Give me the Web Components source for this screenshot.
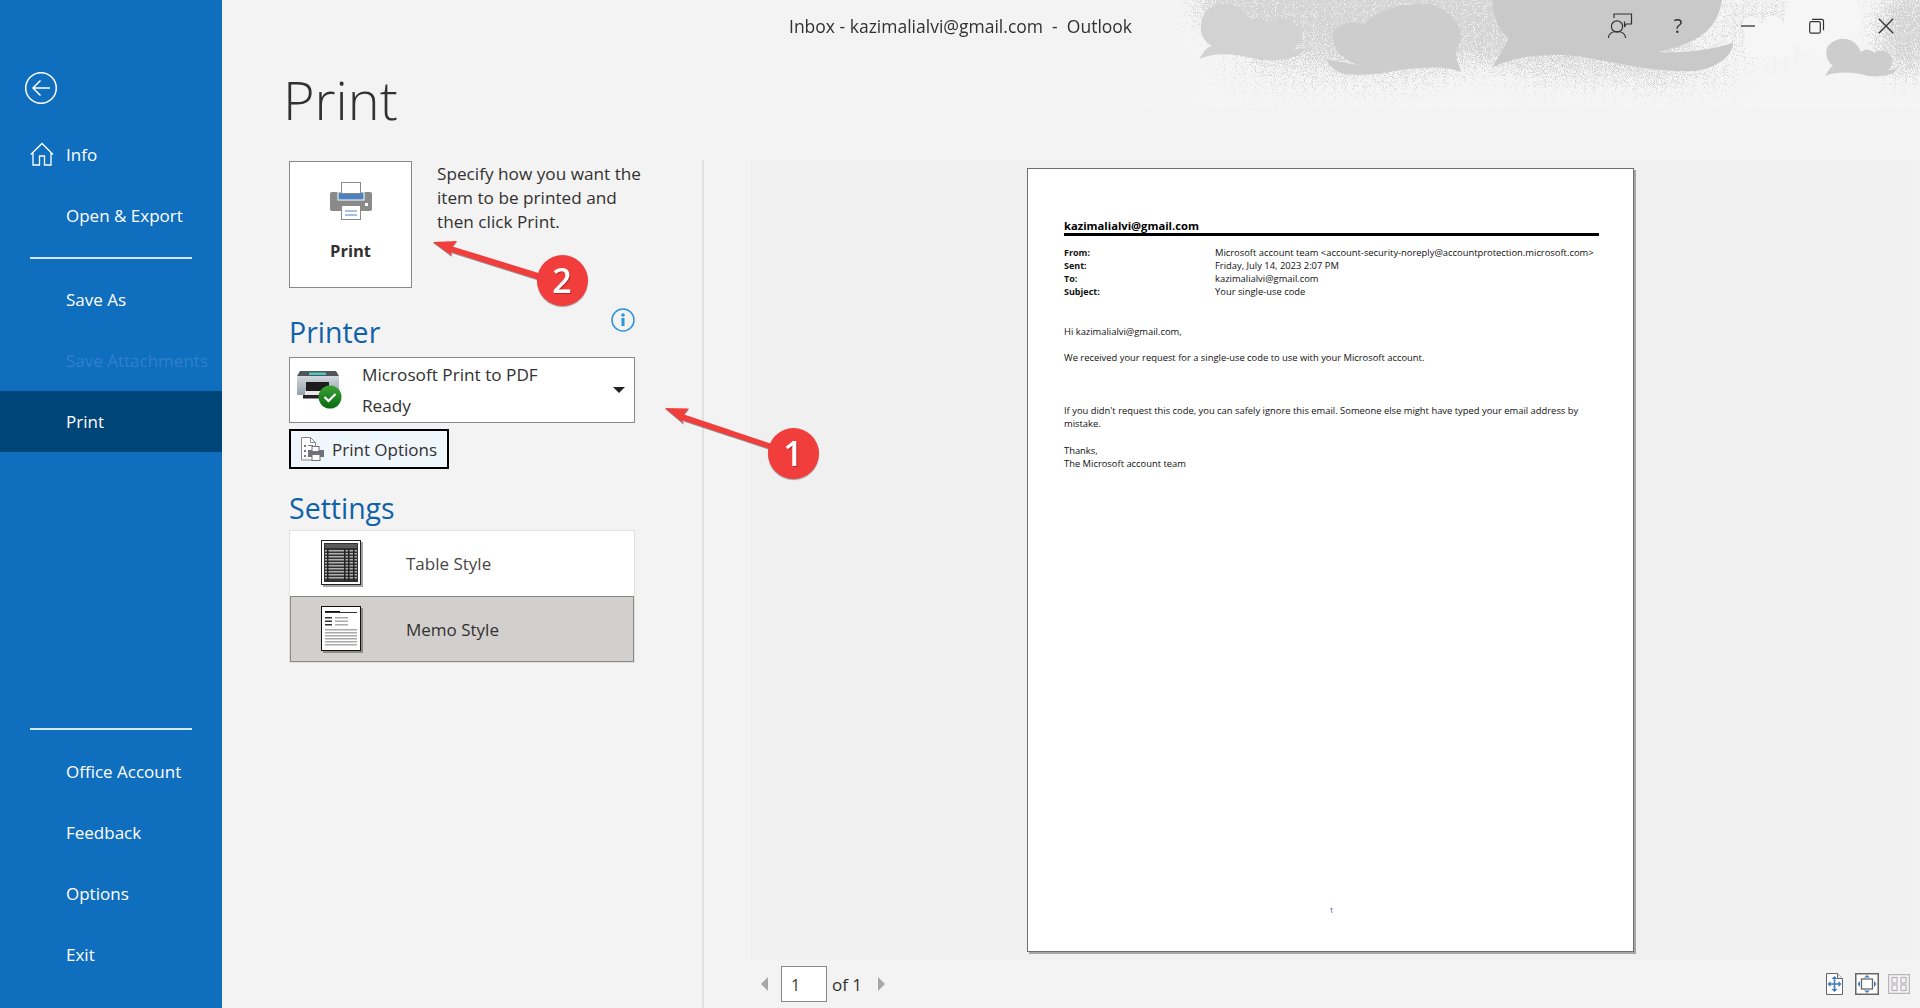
<!DOCTYPE html>
<html lang="en"><head><meta charset="utf-8"><title>Print - Outlook</title>
<style>
html,body{margin:0;height:100%;overflow:hidden}
body{font-family:"Open Sans","Noto Sans",sans-serif;background:#f3f3f3;color:#323130}
</style></head><body>
<app-shell>
  <side-bar slot="side">
    <back-button></back-button>
    <nav-item><svg slot="icon" width="24" height="24" viewBox="0 0 24 24" fill="none" stroke="#fff" stroke-width="1.3"><path d="M.8 12.5 12 1.5l11 11M3 10.5V23h6.5v-9h5v9H21V10.5"/></svg>Info</nav-item>
    <nav-item>Open &amp; Export</nav-item>
    <side-rule></side-rule>
    <nav-item>Save As</nav-item>
    <nav-item disabled>Save Attachments</nav-item>
    <nav-item active>Print</nav-item>
    <side-gap></side-gap>
    <side-rule></side-rule>
    <nav-item>Office Account</nav-item>
    <nav-item>Feedback</nav-item>
    <nav-item>Options</nav-item>
    <nav-item>Exit</nav-item>
  </side-bar>
  <main-pane slot="main">
    <cloud-art></cloud-art>
    <title-bar>Inbox - kazimalialvi@gmail.com&nbsp; -&nbsp; Outlook</title-bar>
    <page-title>Print</page-title>
    <print-columns>
      <print-settings slot="left"></print-settings>
      <print-preview slot="right">
        <mail-page></mail-page>
      </print-preview>
    </print-columns>
    <call-outs></call-outs>
  </main-pane>
</app-shell>
<script>
function def(name, html){
  const t=document.createElement('template');t.innerHTML=html;
  customElements.define(name,class extends HTMLElement{
    constructor(){super();this.attachShadow({mode:'open'}).appendChild(t.content.cloneNode(true));}
  });
}
def('app-shell',`<style>:host{display:grid;grid-template-columns:222px 1fr;width:1920px;height:1008px;overflow:hidden}</style><slot name="side"></slot><slot name="main"></slot>`);
def('side-bar',`<style>:host{display:flex;flex-direction:column;background:#106ebe;height:1008px;padding-bottom:23.5px;box-sizing:border-box;color:#fff}</style><slot></slot>`);
def('back-button',`<style>:host{display:block;height:123.5px;box-sizing:border-box;padding:71px 0 0 25px}svg{display:block}</style>
<svg width="32" height="34" viewBox="0 0 32 34" fill="none" stroke="#fff" stroke-width="1.5"><circle cx="16" cy="17" r="15.3"/><path d="M25 17H8M15.5 9.5 8 17l7.5 7.5"/></svg>`);
def('nav-item',`<style>:host{display:grid;grid-template-columns:66px 1fr;align-items:center;height:61px;font-size:17px;color:#fff;white-space:nowrap;flex:none}
:host([active]){background:#004578}:host([disabled]){color:#2f80cc}.i{padding-left:30px;display:flex}</style><span class="i"><slot name="icon"></slot></span><span><slot></slot></span>`);
def('side-rule',`<style>:host{display:block;height:2px;background:#d5e6f5;margin:11px 30px 10.5px;flex:none}</style>`);
def('side-gap',`<style>:host{display:block;flex:1}</style>`);
def('main-pane',`<style>:host{display:flex;flex-direction:column;position:relative;background:#f3f3f3;height:1008px;min-width:0}</style><slot></slot>`);
def('cloud-art',`<style>:host{position:absolute;top:0;right:0;width:800px;height:108px;pointer-events:none}svg{display:block}</style>
<svg width="800" height="108" viewBox="1120 0 800 108">
<defs>
<linearGradient id="fade" x1="0" y1="0" x2="1" y2="0"><stop offset="0" stop-color="#f5f5f5" stop-opacity="0"/><stop offset=".12" stop-color="#f5f5f5"/></linearGradient>
<filter id="st" filterUnits="userSpaceOnUse" x="1120" y="0" width="800" height="108" color-interpolation-filters="sRGB">
<feGaussianBlur in="SourceGraphic" stdDeviation="16" result="d"/>
<feTurbulence type="fractalNoise" baseFrequency="1.1" numOctaves="1" seed="4" result="n"/>
<feColorMatrix in="n" type="matrix" values="0 0 0 0 0 0 0 0 0 0 0 0 0 0 0 2.6 0 0 0 -0.8" result="m"/>
<feComposite in="d" in2="m" operator="arithmetic" k1="0" k2="1" k3="1" k4="-1" result="s"/>
<feComponentTransfer in="s" result="a"><feFuncA type="linear" slope="3"/></feComponentTransfer>
<feFlood flood-color="#d4d4d4"/><feComposite in2="a" operator="in"/>
</filter>
<filter id="b2" x="-20%" y="-20%" width="140%" height="140%"><feGaussianBlur stdDeviation=".5"/></filter>
</defs>
<rect x="1120" width="800" height="108" fill="url(#fade)"/>
<g filter="url(#st)">
<ellipse cx="1400" cy="5" rx="210" ry="58" fill="#000"/>
<ellipse cx="1580" cy="45" rx="120" ry="40" fill="#000" opacity=".72"/>
<ellipse cx="1760" cy="20" rx="60" ry="35" fill="#000" opacity=".5"/>
<ellipse cx="1680" cy="72" rx="70" ry="20" fill="#000" opacity=".5"/>
<ellipse cx="1340" cy="72" rx="130" ry="24" fill="#000" opacity=".42"/>
<ellipse cx="1908" cy="30" rx="35" ry="50" fill="#000"/>
</g>
<circle cx="1822" cy="18" r="38" fill="#f6f6f6" filter="url(#b2)"/>
<g fill="#f6f6f6"><circle cx="1752" cy="26" r="10"/><circle cx="1772" cy="25" r="10"/><circle cx="1785" cy="30" r="9"/><rect x="1745" y="27" width="50" height="30"/></g>
<g fill="#cdcdcd">
<path fill="#d2d2d2" d="M1199 59C1204 52 1206 47 1212 46 1200 40 1198 25 1204 14 1212 2 1238-2 1250 20 1258 17 1264 18 1268 24 1280 14 1300 18 1300 35 1300 42 1296 46 1292 50L1306 48C1300 58 1280 62 1260 60 1235 53 1215 52 1199 59Z"/>
<path d="M1326 59C1335 61 1345 63 1358 65 1340 58 1332 48 1333 35 1335 24 1350 20 1365 24 1375 12 1400 2 1430 4 1450 10 1462 25 1461 38 1460 45 1455 50 1456 55 1456 62 1460 66 1461 72 1445 66 1425 67 1400 70 1375 75 1345 78 1335 70 1330 66 1328 62 1326 59Z"/>
<path fill="#c9c9c9" d="M1493 67C1498 58 1503 50 1509 38 1502 32 1493 22 1493 0L1722 0C1718 25 1705 42 1658 52 1680 54 1710 50 1733 43 1733 55 1718 68 1695 71 1670 73 1630 66 1600 60 1570 54 1530 50 1493 67Z"/>
<path d="M1825 76C1829 70 1830 67 1833 66 1825 60 1824 48 1830 44 1838 36 1855 36 1861 52 1866 48 1872 50 1874 53 1882 47 1893 52 1892 62 1892 66 1890 69 1888 70L1897 69C1893 76 1880 77 1868 76 1855 72 1838 71 1825 76Z"/>
</g>
</svg>`);
def('title-bar',`<style>:host{display:flex;align-items:center;position:relative;height:52px;flex:none;font-size:17.5px;color:#323130;white-space:nowrap}
.t{margin-left:567px}.w{position:absolute;left:1386px;top:0;height:52px;display:flex;align-items:center;color:#333}
.w>*{width:69px;display:flex;justify-content:center;align-items:center;flex:none;margin-left:0}
.q{font-size:20px;font-weight:400;line-height:1}</style>
<span class="t"><slot></slot></span>
<span class="w">
<span style="width:58px;margin-left:-17px"><svg width="26" height="26" viewBox="0 0 26 26" fill="none" stroke="#333" stroke-width="1.2"><circle cx="10" cy="13.5" r="5.6"/><path d="M1.300 25c.6-5 4-6.500 8.700-6.500S18 20 18.700 25"/><path d="M7 5V1h17.500v10H19l-1.500 3V8.500"/></svg></span>
<span class="q" style="width:58px">?</span>
<span style="width:69px;margin-left:6px"><svg width="16" height="16" viewBox="0 0 16 16"><path d="M1 8h14" stroke="#333" stroke-width="1.3"/></svg></span>
<span><svg width="16" height="16" viewBox="0 0 16 16" fill="none" stroke="#333" stroke-width="1.2"><rect x=".7" y="3.700" width="10.600" height="11.500" rx="1.500"/><path d="M3 1.300h9.500c1.200 0 2 .8 2 2v9"/></svg></span>
<span><svg width="16" height="16" viewBox="0 0 16 16"><path d="M.8.800l14.400 14.400M15.200.8.800 15.200" stroke="#333" stroke-width="1.300"/></svg></span>
</span>`);
def('page-title',`<style>:host{display:block;height:108px;box-sizing:border-box;padding:15px 0 0 61px;font-size:54px;font-weight:300;line-height:64px;color:#323130;flex:none;position:relative}</style><slot></slot>`);
def('print-columns',`<style>:host{display:grid;grid-template-columns:481px 1fr;flex:1;min-height:0}</style><slot name="left"></slot><slot name="right"></slot>`);
def('print-settings',`<style>
:host{display:block;box-sizing:border-box;padding:1px 0 0 67px;border-right:2px solid #e1e1e1;width:482px;font-size:17px}
.top{display:flex;gap:25px}
.pb{width:123px;height:127px;box-sizing:border-box;background:#fff;border:1px solid #8a8886;display:flex;flex-direction:column;align-items:center;padding-top:20px;flex:none}
.pb svg{display:block}.pb b{margin-top:19px;font-size:16.5px;font-weight:700;color:#323130;line-height:24px}
.desc{line-height:24px;margin-top:.5px;color:#323130;white-space:nowrap;font-size:17.2px}
.hrow{display:flex;justify-content:space-between;width:346px;padding-top:20px;align-items:flex-start}
h2{margin:4px 0 5px 0;height:40px;line-height:40px;font-size:28.5px;font-weight:400;color:#0f62a8}
.dd{width:346px;height:66px;box-sizing:border-box;background:#fff;border:1px solid #8a8886;display:grid;grid-template-columns:72px 1fr 30px;align-items:center}
.dd .ic{padding-left:7px;display:flex}
.dd .tx{display:flex;flex-direction:column;gap:7px;line-height:24px;font-size:17.2px}
.car{width:0;height:0;border:6px solid transparent;border-top:6px solid #222;border-bottom:0;justify-self:center}
.opt{display:flex;align-items:center;box-sizing:border-box;height:40px;width:160px;margin-top:6px;border:2px solid #000;background:#eff6fc;padding-left:10px;gap:8px}
.setH{margin:19px 0 2px 0}
.list{width:346px;box-sizing:border-box;border:1px solid #e1e1e1}
.it{height:65px;box-sizing:border-box;display:grid;grid-template-columns:116px 1fr;align-items:center;background:#fff;color:#484644}
.it svg{margin-left:31px;display:block}
.it.sel{height:66px;background:#d2d0ce;border:1px solid #8a8886;color:#323130;grid-template-columns:115px 1fr}
.it.sel svg{margin-left:30px}
</style>
<div class="top"><div class="pb">
<svg width="44" height="38" viewBox="0 0 44 38"><path fill="#8a8a8a" d="M3 10h38a2 2 0 0 1 2 2v15a2 2 0 0 1-2 2H3a2 2 0 0 1-2-2V12a2 2 0 0 1 2-2Z"/><rect x="9" y="10" width="26" height="8" fill="#4f81bd" stroke="#fff" stroke-width="1"/><rect x="12.500" y=".5" width="19" height="11" fill="#fff" stroke="#8a8a8a"/><rect x="12.500" y="23.500" width="19" height="14" fill="#fff" stroke="#8a8a8a"/><path d="M16 29h12M16 33h12" stroke="#4f81bd"/><rect x="36" y="21" width="3" height="3" fill="#fff"/></svg>
<b>Print</b></div>
<div class="desc">Specify how you want the<br>item to be printed and<br>then click Print.</div></div>
<div class="hrow"><h2>Printer</h2><svg width="24" height="24" viewBox="0 0 24 24"><circle cx="12" cy="12" r="11" fill="none" stroke="#2b93d6" stroke-width="1.500"/><rect x="10.500" y="10" width="3" height="8" fill="#2b93d6"/><circle cx="12" cy="7" r="1.800" fill="#2b93d6"/></svg></div>
<div class="dd"><span class="ic"><svg width="46" height="40" viewBox="0 0 46 40"><defs><linearGradient id="bd" x1="0" y1="0" x2="0" y2="1"><stop offset="0" stop-color="#d2d9de"/><stop offset="1" stop-color="#93a0a8"/></linearGradient><linearGradient id="gr" x1="0" y1="0" x2="0" y2="1"><stop offset="0" stop-color="#3aa335"/><stop offset="1" stop-color="#0a6a12"/></linearGradient></defs><path fill="#4f5659" d="M3 1h36l3 5H0Z"/><rect x="12" y="2.500" width="17" height="2.500" fill="#4ec8c0"/><rect y="6" width="42" height="19" rx="1" fill="url(#bd)"/><rect x="9" y="12" width="23" height="9" fill="#1c1c1c"/><rect x="8" y="21" width="25" height="4" fill="#e8e8e8"/><rect x="6" y="25" width="30" height="3.500" fill="#222"/><circle cx="33" cy="27" r="11.500" fill="url(#gr)"/><path d="m27.500 27 4 4 7-7" fill="none" stroke="#fff" stroke-width="2.200"/></svg></span>
<span class="tx"><span>Microsoft Print to PDF</span><span>Ready</span></span><span class="car"></span></div>
<div class="opt"><svg width="23" height="24" viewBox="0 0 23 24"><path fill="#fff" stroke="#8a8886" d="M.5.500h9l5 5V23H.500Z"/><path d="M9.500.500v5h5" fill="none" stroke="#8a8886"/><path fill="#7a7a7a" d="M3 8h2v2H3zM3 13h2v2H3zM3 18h2v2H3zM7 8h5v1H7z"/><path fill="#6f7378" d="M7 13h16v7H7z"/><rect x="11" y="9.500" width="7" height="5" fill="#fff" stroke="#6f7378"/><rect x="11" y="17.500" width="8" height="6" fill="#fff" stroke="#6f7378"/></svg><span>Print Options</span></div>
<h2 class="setH">Settings</h2>
<div class="list">
<div class="it"><svg width="42" height="47" viewBox="0 0 42 47"><rect x="2" y="2" width="40" height="45" fill="#a5a5a5"/><rect x=".5" y=".5" width="39" height="44" fill="#fff" stroke="#222"/><rect x="3" y="3" width="34" height="39" fill="#333"/><rect x="4" y="4" width="32" height="4" fill="#5a5a5a"/><g fill="#b0b0b0"><rect x="4" y="10" width="32" height="1.500"/><rect x="4" y="13" width="32" height="1.500"/><rect x="4" y="16" width="32" height="1.500"/><rect x="4" y="19" width="32" height="1.500"/><rect x="4" y="22" width="32" height="1.500"/><rect x="4" y="25" width="32" height="1.500"/><rect x="4" y="28" width="32" height="1.500"/><rect x="4" y="31" width="32" height="1.500"/><rect x="4" y="34" width="32" height="1.500"/><rect x="4" y="37" width="32" height="1.500"/></g><g fill="#222"><rect x="6" y="9" width="1.500" height="32"/><rect x="23" y="9" width="1.500" height="32"/><rect x="27" y="9" width="1.500" height="32"/><rect x="32" y="9" width="1.500" height="32"/></g></svg><span>Table Style</span></div>
<div class="it sel"><svg width="42" height="47" viewBox="0 0 42 47"><rect x="2" y="2" width="40" height="45" fill="#8e8c8a"/><rect x=".5" y=".5" width="39" height="44" fill="#fff" stroke="#111"/><rect x="4" y="5" width="15" height="2" fill="#111"/><rect x="4" y="6" width="32" height="1" fill="#333"/><g fill="#333"><rect x="4" y="11" width="7" height="1.500"/><rect x="4" y="14.500" width="7" height="1.500"/><rect x="4" y="18" width="7" height="1.500"/></g><g fill="#aaa"><rect x="14" y="11" width="13" height="1.500"/><rect x="14" y="14.500" width="13" height="1.500"/><rect x="14" y="18" width="13" height="1.500"/><rect x="4" y="23" width="32" height="1.500"/><rect x="4" y="26" width="32" height="1.500"/><rect x="4" y="29" width="32" height="1.500"/><rect x="4" y="32" width="32" height="1.500"/><rect x="4" y="35" width="32" height="1.500"/><rect x="4" y="38" width="32" height="1.500"/></g></svg><span>Memo Style</span></div>
</div>`);
def('print-preview',`<style>:host{display:flex;flex-direction:column;height:848px;box-sizing:border-box;padding-left:47px;min-width:0}
.area{background:#f0f0f0;height:800px;width:1163px;box-sizing:border-box;padding:8px 0 0 277px;flex:none}
.bar{flex:1;display:flex;align-items:center;padding-left:11px;font-size:17px;color:#323130;position:relative}
.tri{width:0;height:0;border:7px solid transparent;flex:none}
.l{border-right:7px solid #a6a6a6;border-left:0}.r{border-left:7px solid #a6a6a6;border-right:0;margin-left:16px}
.in{width:46px;height:36px;box-sizing:border-box;border:1px solid #8a8886;background:#fff;margin-left:13px;padding:7px 0 0 9px;line-height:22px;font-size:16px;color:#4a3a30}
.of{margin-left:5px}.z{display:flex;align-items:center;margin-left:auto;margin-right:10px;gap:12px}.z svg{display:block}</style>
<div class="area"><slot></slot></div>
<div class="bar"><span class="tri l"></span><span class="in">1</span><span class="of">of 1</span><span class="tri r"></span>
<span class="z">
<svg width="17" height="22" viewBox="0 0 17 22"><path fill="#fff" stroke="#666" d="M.5.500h11l5 5v16H.5z"/><path d="M11.500.500v5h5" fill="#eee" stroke="#666"/><path d="M8.500 5v12M3 11h11" stroke="#3f7cbb" stroke-width="1.600"/><path fill="#3f7cbb" d="m8.500 3 3 3h-6zM8.500 19l3-3h-6zM1.500 11l3-3v6zM15.500 11l-3-3v6z"/></svg>
<svg width="24" height="22" viewBox="0 0 24 22"><rect x=".75" y=".75" width="22.500" height="20.500" fill="#fff" stroke="#666" stroke-width="1.500"/><rect x="6.500" y="6" width="11" height="10" fill="#fff" stroke="#666" stroke-width="1.300"/><path fill="#3f7cbb" d="m12 2 3 2.500H9zM12 20l3-2.500H9zM2.500 11 5 8v6zM21.500 11 19 8v6z"/></svg>
<svg style="margin-left:-3px" width="22" height="20" viewBox="0 0 22 20" fill="none" stroke="#b8b4b8" stroke-width="1.200"><rect x=".6" y=".6" width="20.800" height="18.800"/><rect x="4" y="3.500" width="5" height="5.500"/><rect x="13" y="3.500" width="5" height="5.500"/><rect x="4" y="11" width="5" height="5.500"/><rect x="13" y="11" width="5" height="5.500"/></svg>
</span></div>`);
def('mail-page',`<style>:host{display:flex;flex-direction:column;width:607px;height:784px;box-sizing:border-box;background:#fff;border:1px solid #6e6e6e;box-shadow:2px 2px 0 #a6a6a6;padding:0 34px 34px 36px;font-size:9.4px;line-height:13px;color:#111;white-space:nowrap}
h3{margin:49px 0 0;font-size:11.2px;font-weight:700;line-height:15px;border-bottom:3px solid #000;color:#000}
.m{display:grid;grid-template-columns:151px 1fr;margin-top:10px}.m b{font-weight:700;font-size:9px}
p{margin:0}
.n{margin-top:auto;text-align:center;color:#1c1c9c;font-size:7px}</style>
<h3>kazimalialvi@gmail.com</h3>
<div class="m"><b>From:</b><span>Microsoft account team &lt;account-security-noreply@accountprotection.microsoft.com&gt;</span><b>Sent:</b><span>Friday, July 14, 2023 2:07 PM</span><b>To:</b><span>kazimalialvi@gmail.com</span><b>Subject:</b><span>Your single-use code</span></div>
<p style="margin-top:27px">Hi kazimalialvi@gmail.com,</p>
<p style="margin-top:13px">We received your request for a single-use code to use with your Microsoft account.</p>
<p style="margin-top:40px">If you didn't request this code, you can safely ignore this email. Someone else might have typed your email address by<br>mistake.</p>
<p style="margin-top:14px">Thanks,<br>The Microsoft account team</p>
<div class="n">1</div>`);
def('call-outs',`<style>:host{position:absolute;left:0;top:0;width:1698px;height:1008px;pointer-events:none}
.b{position:absolute;width:51px;height:51px;border-radius:50%;background:#f23d3d;color:#fff;font-size:34px;font-weight:600;line-height:51px;text-align:center;box-shadow:0 1px 1px rgba(0,0,0,.35);text-shadow:1px 1px 0 rgba(90,0,0,.4)}
svg{position:absolute;left:0;top:0}</style>
<svg width="1698" height="1008" viewBox="222 0 1698 1008"><g fill="#f23d3d" style="filter:drop-shadow(0 1px .5px rgba(0,0,0,.4))">
<path d="M433 242 457 241 452.500 246.500 545 275 543 281 451 252 452 256Z"/>
<path d="M665 408 689 408.500 684 414.500 772 444 770 449 682 420 684 424Z"/>
</g></svg>
<span class="b" style="left:314.500px;top:254.500px">2</span>
<span class="b" style="left:545.500px;top:427.500px">1</span>`);
</script>
</body></html>
